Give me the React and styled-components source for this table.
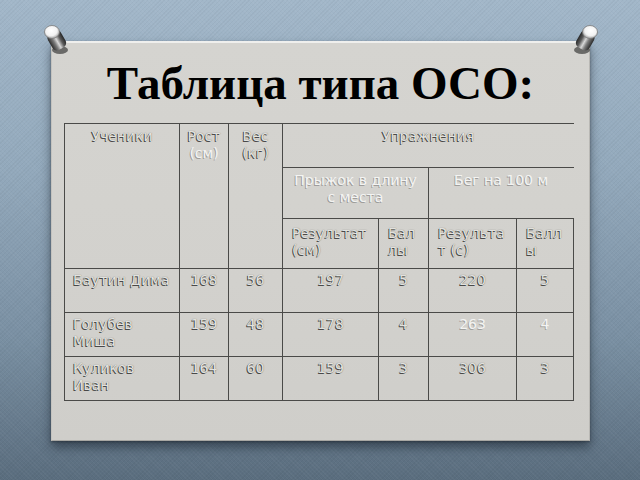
import styled, { createGlobalStyle } from "styled-components";

const GlobalStyle = createGlobalStyle`
  html, body {
    margin: 0;
    padding: 0;
    width: 640px;
    height: 480px;
    overflow: hidden;
  }
`;

const students = [
  { name: "Баутин Дима", height: "168", weight: "56", jump: "197", jumpScore: "5", run: "220", runScore: "5" },
  { name: "Голубев Миша", height: "159", weight: "48", jump: "178", jumpScore: "4", run: "263", runScore: "4", faintRun: true },
  { name: "Куликов Иван", height: "164", weight: "60", jump: "159", jumpScore: "3", run: "306", runScore: "3" },
];

const colWidths = [115, 49, 54, 96, 50, 88, 57];

const Pin = ({ flip }) => (
  <PinWrap $flip={flip}>
    <svg width="32" height="36" viewBox="0 0 32 36">
      <defs>
        <linearGradient id="pinBody" x1="0" y1="0" x2="1" y2="0">
          <stop offset="0" stopColor="#2c2c2c" />
          <stop offset="0.3" stopColor="#7c7c7c" />
          <stop offset="0.5" stopColor="#d8d8d8" />
          <stop offset="0.75" stopColor="#5a5a5a" />
          <stop offset="1" stopColor="#262626" />
        </linearGradient>
        <radialGradient id="pinCap" cx="0.45" cy="0.4" r="0.6">
          <stop offset="0" stopColor="#ffffff" />
          <stop offset="0.65" stopColor="#f2f2f2" />
          <stop offset="1" stopColor="#a0a0a0" />
        </radialGradient>
      </defs>
      <ellipse cx="21" cy="29" rx="8" ry="4" fill="rgba(0,0,0,0.5)" />
      <g transform="rotate(-30 17 18)">
        <rect x="9.5" y="10" width="15" height="19" rx="5" fill="url(#pinBody)" />
      </g>
      <ellipse cx="13" cy="11" rx="7.5" ry="6.5" fill="url(#pinCap)" stroke="#7a7a7a" strokeWidth="0.8" />
    </svg>
  </PinWrap>
);

const App = () => {
  return (
    <>
      <GlobalStyle />
      <Page>
        <Card>
          <Pin />
          <Pin flip />
          <Title>Таблица типа ОСО:</Title>
          <Table>
            <colgroup>
              {colWidths.map((w, i) => (
                <col key={i} style={{ width: w }} />
              ))}
            </colgroup>
            <thead>
              <tr>
                <HeadCell rowSpan={3}>Ученики</HeadCell>
                <HeadCell rowSpan={3} $narrow>
                  Рост <Faint>(см)</Faint>
                </HeadCell>
                <HeadCell rowSpan={3} $narrow>
                  Вес (кг)
                </HeadCell>
                <HeadCell colSpan={4} $openRight>
                  Упражнения
                </HeadCell>
              </tr>
              <tr>
                <HeadCell colSpan={2} $tall>
                  <Faint>Прыжок в длину с места</Faint>
                </HeadCell>
                <HeadCell colSpan={2} $tall $openRight>
                  <Faint>Бег на 100 м</Faint>
                </HeadCell>
              </tr>
              <tr>
                <SubCell>Результат (см)</SubCell>
                <SubCell>Баллы</SubCell>
                <SubCell>Результат (с)</SubCell>
                <SubCell>Баллы</SubCell>
              </tr>
            </thead>
            <tbody>
              {students.map((s) => (
                <tr key={s.name}>
                  <NameCell>{s.name}</NameCell>
                  <NumCell>{s.height}</NumCell>
                  <NumCell>{s.weight}</NumCell>
                  <NumCell>{s.jump}</NumCell>
                  <NumCell>{s.jumpScore}</NumCell>
                  <NumCell $faint={s.faintRun}>{s.run}</NumCell>
                  <NumCell $faint={s.faintRun}>{s.runScore}</NumCell>
                </tr>
              ))}
            </tbody>
          </Table>
        </Card>
      </Page>
    </>
  );
};

export default App;

const Page = styled.div`
  box-sizing: border-box;
  width: 640px;
  height: 480px;
  padding: 41px 0 0 51px;
  background:
    repeating-linear-gradient(45deg, rgba(255, 255, 255, 0.03) 0 1px, transparent 1px 3px),
    repeating-linear-gradient(-45deg, rgba(0, 0, 0, 0.03) 0 1px, transparent 1px 3px),
    linear-gradient(180deg, #a2b7c9 0%, #93a9bc 35%, #7a90a3 70%, #5a6d7e 100%);
`;

const Card = styled.div`
  position: relative;
  box-sizing: border-box;
  width: 539px;
  height: 400px;
  padding: 13px 0 0 12px;
  background: linear-gradient(180deg, #d5d4d0 0%, #d2d1cd 60%, #cfceca 100%);
  border-top: 2px solid #efefed;
  border-left: 1px solid #c4c3bf;
  border-right: 1px solid #b9b8b4;
  border-bottom: 1px solid #a8a7a3;
  box-shadow: 0 6px 10px rgba(20, 30, 40, 0.55), 0 1px 2px rgba(0, 0, 0, 0.3);
`;

const PinWrap = styled.div`
  position: absolute;
  top: -22px;
  ${({ $flip }) => ($flip ? "right: -14px; transform: scaleX(-1);" : "left: -13px;")}
  line-height: 0;
`;

const Title = styled.h1`
  margin: 0 0 13px -12px;
  font-family: "Liberation Serif", "Times New Roman", serif;
  font-weight: bold;
  font-size: 47px;
  line-height: 54px;
  text-align: center;
  color: #000000;
  text-shadow: none;
`;

const Table = styled.table`
  table-layout: fixed;
  width: 509px;
  border-collapse: collapse;
  font-family: "DejaVu Sans", Verdana, sans-serif;
  font-size: 14px;
  line-height: 17px;
  color: #e2e2df;
  text-shadow: -1px 1px 0 rgba(50, 50, 50, 0.85), 0 0 1px rgba(40, 40, 40, 0.6);

  td,
  th {
    border: 1px solid #4a4a48;
    vertical-align: top;
    box-sizing: border-box;
  }
`;

const HeadCell = styled.th`
  font-weight: normal;
  text-align: center;
  padding: 4px ${({ $narrow }) => ($narrow ? "4px" : "8px")} 0;
  height: ${({ $tall }) => ($tall ? "51px" : "44px")};
  ${({ $openRight }) => $openRight && "border-right-color: transparent !important;"}
`;

const SubCell = styled.th`
  font-weight: normal;
  text-align: left;
  padding: 6px 9px 0;
  height: 50px;
  word-break: break-all;
`;

const Faint = styled.span`
  color: #f4f4f2;
  text-shadow: -1px 1px 0 rgba(70, 70, 70, 0.4);
`;

const NameCell = styled.td`
  height: 44px;
  padding: 3px 8px 0;
  text-align: left;
`;

const NumCell = styled.td`
  height: 44px;
  padding: 3px 4px 0;
  text-align: center;
  ${({ $faint }) =>
    $faint && "color: #f4f4f2; text-shadow: -1px 1px 0 rgba(70, 70, 70, 0.35);"}
`;
